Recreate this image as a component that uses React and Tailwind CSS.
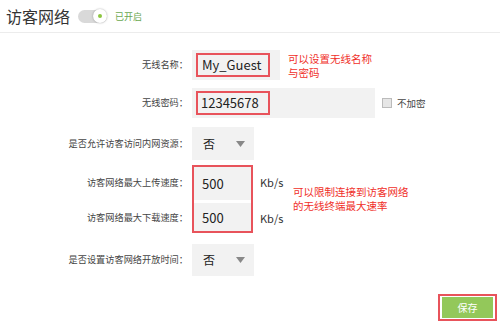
export default function App() {
  const font = { fontFamily: '"Noto Sans CJK SC", "Noto Sans", sans-serif' };
  return (
    <div className="w-[500px] h-[322px] bg-white overflow-hidden text-[#444]" style={font}>
      {/* header */}
      <div className="h-[33px] border-b border-[#ececec] flex items-center pl-[6px]">
        <span className="text-[16px] leading-none text-[#333]">访客网络</span>
        <div className="ml-[8px] w-[29px] h-[13px] rounded-full bg-[#d9d9d9] relative flex items-center justify-end">
          <div className="w-[14px] h-[14px] rounded-full bg-white shadow-[0_0_2px_rgba(0,0,0,0.35)] flex items-center justify-center">
            <div className="w-[4px] h-[4px] rounded-full bg-[#8cc63f]"></div>
          </div>
        </div>
        <span className="ml-[8px] text-[9px] text-[#6aa84f] leading-none">已开启</span>
      </div>

      {/* row 1 */}
      <div className="flex items-center mt-[17px] h-[30px]">
        <div className="w-[192px] pr-[4px] text-right text-[9.2px] text-[#444]">无线名称：</div>
        <div className="w-[88px] h-[30px] bg-[#f2f2f2] flex items-center pl-[4px]">
          <div className="w-[74px] h-[24px] border-2 border-[#e8535b] flex items-center pl-[4px] text-[13px] text-[#222]">My_Guest</div>
        </div>
        <div className="ml-[8px] text-[10.5px] text-[#f0302a] mt-[2px] flex flex-col">
          <div className="leading-[14px]">可以设置无线名称</div>
          <div className="leading-[14px]">与密码</div>
        </div>
      </div>

      {/* row 2 */}
      <div className="flex items-center mt-[8px] h-[30px]">
        <div className="w-[192px] pr-[4px] text-right text-[9.2px] text-[#444]">无线密码：</div>
        <div className="w-[183px] h-[30px] bg-[#f2f2f2] flex items-center pl-[4px]">
          <div className="w-[74px] h-[24px] border-2 border-[#e8535b] flex items-center pl-[3px] text-[13px] text-[#222]">12345678</div>
        </div>
        <div className="ml-[7px] w-[10px] h-[10px] border border-[#bbb] bg-[#e6e6e6]"></div>
        <span className="ml-[5px] text-[9.5px] text-[#444]">不加密</span>
      </div>

      {/* row 3 */}
      <div className="flex items-center mt-[9px] h-[33px]">
        <div className="w-[192px] pr-[4px] text-right text-[9.2px] text-[#444]">是否允许访客访问内网资源：</div>
        <div className="w-[62px] h-[33px] bg-[#f2f2f2] flex items-center justify-between pl-[11px] pr-[9px]">
          <span className="text-[12px] text-[#222]">否</span>
          <svg width="9" height="6" viewBox="0 0 9 6"><path d="M0 0 L9 0 L4.5 6 Z" fill="#888" /></svg>
        </div>
      </div>

      {/* rows 4-5 */}
      <div className="flex mt-[5px]">
        <div className="w-[192px] flex flex-col">
          <div className="h-[35px] flex items-center justify-end pr-[4px] text-[9.2px] text-[#444]">访客网络最大上传速度：</div>
          <div className="h-[32px] flex items-center justify-end pr-[4px] text-[9.2px] text-[#444] mt-[2px]">访客网络最大下载速度：</div>
        </div>
        <div className="w-[61px] h-[68px] border-2 border-[#e8535b] flex flex-col">
          <div className="h-[33px] bg-[#f2f2f2] flex items-center pl-[8px] text-[13px] text-[#222]">500</div>
          <div className="h-[3px] bg-white"></div>
          <div className="flex-1 bg-[#f2f2f2] flex items-center pl-[8px] text-[13px] text-[#222] pt-[2px]">500</div>
        </div>
        <div className="flex flex-col w-[40px] pl-[7px]">
          <div className="h-[35px] flex items-center text-[11px] text-[#333]">Kb/s</div>
          <div className="h-[32px] flex items-center text-[11px] text-[#333] mt-[2px]">Kb/s</div>
        </div>
        <div className="mt-[20px] text-[10.5px] text-[#f0302a] flex flex-col">
          <div className="leading-[14px]">可以限制连接到访客网络</div>
          <div className="leading-[14px]">的无线终端最大速率</div>
        </div>
      </div>

      {/* row 6 */}
      <div className="flex items-center mt-[10px] h-[32px]">
        <div className="w-[192px] pr-[4px] text-right text-[9.2px] text-[#444]">是否设置访客网络开放时间：</div>
        <div className="w-[62px] h-[32px] bg-[#f2f2f2] flex items-center justify-between pl-[11px] pr-[9px]">
          <span className="text-[12px] text-[#222]">否</span>
          <svg width="9" height="6" viewBox="0 0 9 6"><path d="M0 0 L9 0 L4.5 6 Z" fill="#888" /></svg>
        </div>
      </div>

      {/* button */}
      <div className="flex justify-end mt-[18px] pr-[3px]">
        <div className="w-[59px] h-[27px] border-2 border-[#e8535b] flex items-center justify-center">
          <div className="w-[51px] h-[21px] bg-[#93c85a] flex items-center justify-center text-[10px] text-white">保存</div>
        </div>
      </div>
    </div>
  );
}
